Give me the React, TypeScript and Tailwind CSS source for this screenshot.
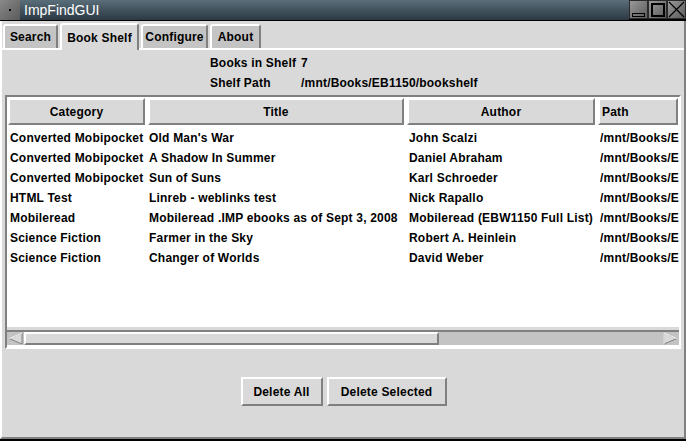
import React from "react";

const rows = [
  ["Converted Mobipocket", "Old Man's War", "John Scalzi", "/mnt/Books/E"],
  ["Converted Mobipocket", "A Shadow In Summer", "Daniel Abraham", "/mnt/Books/E"],
  ["Converted Mobipocket", "Sun of Suns", "Karl Schroeder", "/mnt/Books/E"],
  ["HTML Test", "Linreb - weblinks test", "Nick Rapallo", "/mnt/Books/E"],
  ["Mobileread", "Mobileread .IMP ebooks as of Sept 3, 2008", "Mobileread (EBW1150 Full List)", "/mnt/Books/E"],
  ["Science Fiction", "Farmer in the Sky", "Robert A. Heinlein", "/mnt/Books/E"],
  ["Science Fiction", "Changer of Worlds", "David Weber", "/mnt/Books/E"],
];

const cols = [
  { label: "Category", w: "w-[137px]", center: true },
  { label: "Title", w: "w-[256px]", center: true },
  { label: "Author", w: "w-[188px]", center: true },
  { label: "Path", w: "flex-1", center: false },
];

const bevel =
  "border-2 border-t-white border-l-white border-b-[#808080] border-r-[#808080]";

function WinButton({ children }: { children: React.ReactNode }) {
  return (
    <div className="w-[19px] h-[19px] border border-[#2a2a2a] bg-gradient-to-br from-[#9a9a9a] to-[#5c5c5c] flex items-center justify-center">
      {children}
    </div>
  );
}

function Tab({ label, w, active }: { label: string; w: string; active?: boolean }) {
  return (
    <div
      className={
        active
          ? `${w} h-[27px] bg-[#d9d9d9] border-t-2 border-l-2 border-white border-r-2 border-r-[#808080] rounded-tl-[3px] rounded-tr-[3px] flex items-center justify-center -mb-[2px] relative z-10`
          : `${w} h-[24px] bg-[#c4c4c4] border-t-2 border-l-2 border-white border-r-2 border-r-[#808080] rounded-tl-[3px] rounded-tr-[3px] flex items-center justify-center`
      }
    >
      {label}
    </div>
  );
}

export default function App() {
  return (
    <div
      className="w-[686px] h-[441px] bg-[#d9d9d9] flex flex-col text-[12px] font-bold tracking-[0.2px] text-black overflow-hidden"
      style={{ fontFamily: '"Liberation Sans", Arial, sans-serif' }}
    >
      {/* title bar */}
      <div className="h-[21px] flex bg-black">
        <div className="w-[20px] h-[20px] bg-gradient-to-br from-[#8a8a8a] to-[#5a5a5a] flex items-center justify-center">
          <div className="w-[2px] h-[2px] bg-black" />
        </div>
        <div className="flex-1 h-[20px] bg-gradient-to-b from-[#5a6e79] to-[#2c3944] text-white font-normal tracking-normal text-[14px] leading-[20px] pl-[4px]">
          ImpFindGUI
        </div>
        <div className="flex h-[20px]">
          <WinButton>
            <div className="w-[13px] h-[4px] border border-black mt-[10px]" />
          </WinButton>
          <WinButton>
            <div className="w-[14px] h-[14px] border-2 border-black" />
          </WinButton>
          <WinButton>
            <svg width="17" height="17" viewBox="0 0 17 17">
              <path d="M1 1L16 16M16 1L1 16" stroke="black" strokeWidth="1.2" />
            </svg>
          </WinButton>
        </div>
      </div>

      {/* window body */}
      <div className="flex-1 flex flex-col border-l-2 border-l-white border-b-2 border-b-[#808080] border-r-2 border-r-[#808080]">
        {/* tabs */}
        <div className="flex items-end gap-[2px] pl-[1px] pt-[1px] h-[27px]">
          <Tab label="Search" w="w-[55px]" />
          <Tab label="Book Shelf" w="w-[79px]" active />
          <Tab label="Configure" w="w-[67px]" />
          <Tab label="About" w="w-[51px]" />
        </div>

        <div className="flex-1 flex flex-col border-t-2 border-white">
          {/* info */}
          <div className="pl-[208px] pt-[6px] flex flex-col gap-[5px] leading-[15px]">
            <div className="flex">
              <span className="w-[91px]">Books in Shelf</span>
              <span>7</span>
            </div>
            <div className="flex">
              <span className="w-[91px]">Shelf Path</span>
              <span>/mnt/Books/EB1150/bookshelf</span>
            </div>
          </div>

          {/* table */}
          <div className="mx-[3px] mt-[4px] border-2 border-t-[#808080] border-l-[#808080] border-b-white border-r-white flex flex-col">
            <div className="flex gap-[3px] px-[1px] pt-[1px] bg-white">
              {cols.map((c) => (
                <div
                  key={c.label}
                  className={`${c.w} h-[27px] ${bevel} bg-[#d9d9d9] flex items-center ${c.center ? "justify-center" : "pl-[2px]"}`}
                >
                  {c.label}
                </div>
              ))}
            </div>
            <div className="h-[202px] bg-white pt-[3px] pl-[3px]">
              {rows.map((r, i) => (
                <div key={i} className="flex h-[20px] items-center whitespace-nowrap overflow-hidden">
                  <div className="w-[139px] shrink-0">{r[0]}</div>
                  <div className="w-[260px] shrink-0">{r[1]}</div>
                  <div className="w-[191px] shrink-0">{r[2]}</div>
                  <div className="flex-1 overflow-hidden">{r[3]}</div>
                </div>
              ))}
            </div>
            {/* horizontal scrollbar */}
            <div className="bg-[#d9d9d9] pt-[3px]">
              <div className="h-[17px] bg-[#c3c3c3] border-t-2 border-[#808080] border-b-2 border-b-white flex">
                <div className="w-[17px] h-full flex items-center justify-center">
                  <svg width="17" height="13" viewBox="0 0 17 13">
                    <path d="M15 1L2 6.5L15 12Z" fill="#d9d9d9" stroke="#808080" strokeWidth="1" />
                    <path d="M15 1L2 6.5" stroke="white" strokeWidth="1" />
                  </svg>
                </div>
                <div className={`w-[415px] h-full ${bevel} bg-[#d9d9d9]`} />
                <div className="flex-1" />
                <div className="w-[17px] h-full flex items-center justify-center">
                  <svg width="17" height="13" viewBox="0 0 17 13">
                    <path d="M2 1L15 6.5L2 12Z" fill="#d9d9d9" stroke="#808080" strokeWidth="1" />
                    <path d="M2 1L2 12M2 1L15 6.5" stroke="white" strokeWidth="1" />
                  </svg>
                </div>
              </div>
            </div>
          </div>

          {/* buttons */}
          <div className="flex justify-center gap-[4px] mt-[28px] pl-[1px]">
            <div className={`w-[82px] h-[29px] ${bevel} flex items-center justify-center`}>Delete All</div>
            <div className={`w-[120px] h-[29px] ${bevel} flex items-center justify-center`}>Delete Selected</div>
          </div>
        </div>
      </div>
      <div className="h-[2px] bg-black shrink-0" />
    </div>
  );
}
